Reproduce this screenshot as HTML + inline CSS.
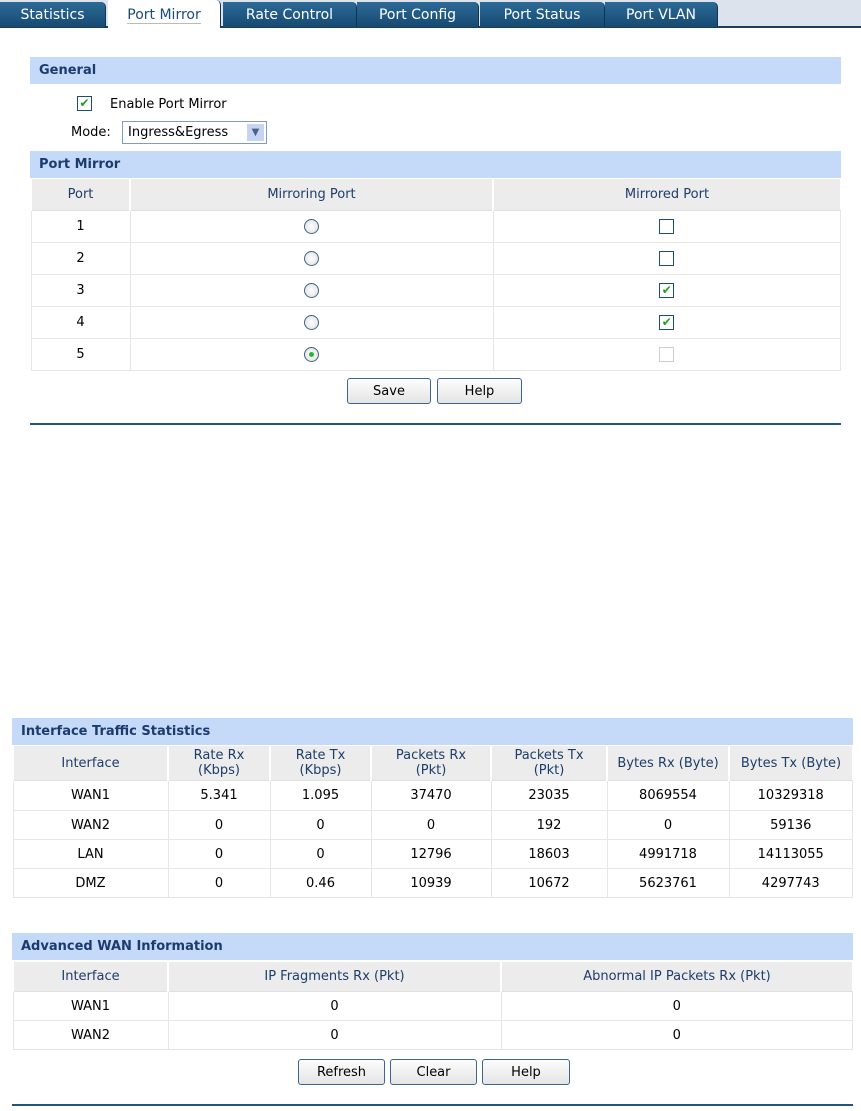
<!DOCTYPE html>
<html><head><meta charset="utf-8"><style>
*{box-sizing:border-box;margin:0;padding:0}
body{width:861px;height:1111px;background:#fff;font-family:"DejaVu Sans","Liberation Sans",sans-serif;font-size:13px;color:#000;position:relative;overflow:hidden}
.abs{position:absolute}
.tabbar{left:0;top:0;width:861px;height:28px;background:#dde3ec;border-bottom:2px solid #1f3d5a}
.tab{position:absolute;top:2px;height:25px;background:linear-gradient(#2c6a96,#164a72);color:#fff;font-size:14px;line-height:27px;text-align:center;border-right:1px solid #0e3554;border-top-right-radius:5px}
.tab.act{background:#fff;color:#1a4d7a;top:0;height:28px;line-height:30px}
.hd{background:#c5d9f8;color:#1b3b6f;font-weight:bold;font-size:13px;padding-left:9px;line-height:27px;height:27px}
table{border-collapse:collapse;position:absolute;table-layout:fixed}
td{text-align:center;border:1px solid #e6e6e6;padding:0;font-size:13px}
tr.th td{background:#ececec;color:#1d3d6a;border-color:#fff #fff #e0e0e0 #fff;border-left:2px solid #fff}
.btn{position:absolute;height:26px;border:1px solid #3d6791;border-radius:3px;background:linear-gradient(#fdfdfd,#e4e4e4);font-size:13px;text-align:center;line-height:25px}
.line{position:absolute;height:2px;background:#23547f}
.rad{display:inline-block;width:15px;height:15px;border:1px solid #3f6388;border-radius:50%;background:radial-gradient(#fff,#dcdcdc);vertical-align:middle;position:relative}
.rad.on::after{content:"";position:absolute;left:4px;top:4px;width:5px;height:5px;border-radius:50%;background:#2db52d}
.cb{display:inline-block;width:15px;height:15px;border:1px solid #1f4a74;background:#fff;vertical-align:middle;color:#1e9e1e;font-size:12px;line-height:13px;font-weight:bold;text-align:center}
.cb.dis{border-color:#cfcfc7}
</style></head><body>
<div class="abs tabbar">
<div class="tab" style="left:0;width:106px">Statistics</div>
<div class="tab act" style="left:108px;width:113px"><span style="border-bottom:1px solid #bbb">Port Mirror</span></div>
<div class="tab" style="left:223px;width:134px">Rate Control</div>
<div class="tab" style="left:357px;width:122px">Port Config</div>
<div class="tab" style="left:480px;width:125px">Port Status</div>
<div class="tab" style="left:605px;width:113px">Port VLAN</div>
</div>

<div class="abs hd" style="left:30px;top:57px;width:811px">General</div>
<span class="abs cb" style="left:77px;top:96px">✔</span>
<div class="abs" style="left:110px;top:97px;font-size:13px">Enable Port Mirror</div>
<div class="abs" style="left:71px;top:125px;font-size:13px">Mode:</div>
<div class="abs" style="left:122px;top:121px;width:145px;height:23px;border:1px solid #7f9db9;font-size:13px;line-height:22px;padding-left:5px">Ingress&amp;Egress<span style="position:absolute;right:2px;top:2px;width:17px;height:17px;background:#c4d4f2;color:#4d6185;font-size:10px;line-height:17px;text-align:center">▼</span></div>
<div class="abs hd" style="left:30px;top:151px;width:811px">Port Mirror</div>
<table style="left:30px;top:178px;width:811px">
<colgroup><col style="width:99px"><col style="width:363px"><col></colgroup>
<tr class="th" style="height:32px"><td>Port</td><td>Mirroring Port</td><td>Mirrored Port</td></tr>
<tr style="height:32px"><td>1</td><td><span class="rad"></span></td><td><span class="cb"></span></td></tr>
<tr style="height:32px"><td>2</td><td><span class="rad"></span></td><td><span class="cb"></span></td></tr>
<tr style="height:32px"><td>3</td><td><span class="rad"></span></td><td><span class="cb">✔</span></td></tr>
<tr style="height:32px"><td>4</td><td><span class="rad"></span></td><td><span class="cb">✔</span></td></tr>
<tr style="height:32px"><td>5</td><td><span class="rad on"></span></td><td><span class="cb dis"></span></td></tr>
</table>
<div class="btn" style="left:347px;top:378px;width:84px">Save</div>
<div class="btn" style="left:437px;top:378px;width:85px">Help</div>
<div class="line" style="left:30px;top:423px;width:811px"></div>

<div class="abs hd" style="left:12px;top:718px;width:841px">Interface Traffic Statistics</div>
<table style="left:12px;top:745px;width:841px">
<colgroup><col style="width:155px"><col style="width:102px"><col style="width:101px"><col style="width:120px"><col style="width:116px"><col style="width:122px"><col></colgroup>
<tr class="th" style="height:35px"><td>Interface</td><td>Rate Rx<br>(Kbps)</td><td>Rate Tx<br>(Kbps)</td><td>Packets Rx<br>(Pkt)</td><td>Packets Tx<br>(Pkt)</td><td>Bytes Rx (Byte)</td><td>Bytes Tx (Byte)</td></tr>
<tr style="height:30px"><td>WAN1</td><td>5.341</td><td>1.095</td><td>37470</td><td>23035</td><td>8069554</td><td>10329318</td></tr>
<tr style="height:29px"><td>WAN2</td><td>0</td><td>0</td><td>0</td><td>192</td><td>0</td><td>59136</td></tr>
<tr style="height:29px"><td>LAN</td><td>0</td><td>0</td><td>12796</td><td>18603</td><td>4991718</td><td>14113055</td></tr>
<tr style="height:29px"><td>DMZ</td><td>0</td><td>0.46</td><td>10939</td><td>10672</td><td>5623761</td><td>4297743</td></tr>
</table>

<div class="abs hd" style="left:12px;top:933px;width:841px">Advanced WAN Information</div>
<table style="left:12px;top:961px;width:841px">
<colgroup><col style="width:155px"><col style="width:333px"><col></colgroup>
<tr class="th" style="height:30px"><td>Interface</td><td>IP Fragments Rx (Pkt)</td><td>Abnormal IP Packets Rx (Pkt)</td></tr>
<tr style="height:29px"><td>WAN1</td><td>0</td><td>0</td></tr>
<tr style="height:29px"><td>WAN2</td><td>0</td><td>0</td></tr>
</table>
<div class="btn" style="left:298px;top:1059px;width:87px">Refresh</div>
<div class="btn" style="left:390px;top:1059px;width:87px">Clear</div>
<div class="btn" style="left:482px;top:1059px;width:88px">Help</div>
<div class="line" style="left:12px;top:1104px;width:841px"></div>
</body></html>
